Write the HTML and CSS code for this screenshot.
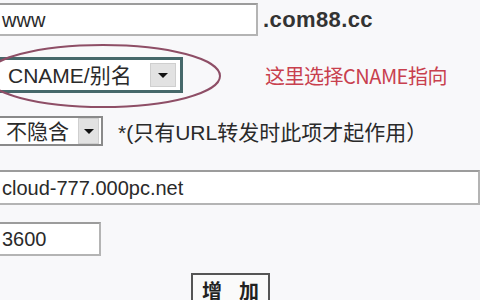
FILE: index.html
```html
<!DOCTYPE html>
<html lang="zh-CN">
<head>
<meta charset="utf-8">
<title>添加记录</title>
<link rel="stylesheet" href="styles.css">
</head>
<body>
<div class="form">
  <div class="row row-host">
    <div class="field field-host">www</div>
    <span class="domain">.com88.cc</span>
  </div>
  <div class="row row-type">
    <div class="select select-type">
      <span class="select-text">CNAME/别名</span>
      <span class="select-btn"><span class="arrow"></span></span>
    </div>
    <span class="hint">这里选择CNAME指向</span>
    <svg class="ring" viewBox="0 0 240 68" width="240" height="68" aria-hidden="true">
      <ellipse cx="120" cy="34" rx="117" ry="31" fill="none" stroke="#8e4e66" stroke-width="2"/>
    </svg>
  </div>
  <div class="row row-hide">
    <div class="select select-hide">
      <span class="select-text">不隐含</span>
      <span class="select-btn"><span class="arrow"></span></span>
    </div>
    <span class="note">*(只有URL转发时此项才起作用）</span>
  </div>
  <div class="row row-value">
    <div class="field field-value">cloud-777.000pc.net</div>
  </div>
  <div class="row row-ttl">
    <div class="field field-ttl">3600</div>
  </div>
  <div class="row row-submit">
    <div class="button"><span>增</span><span>加</span></div>
  </div>
</div>
</body>
</html>
```

FILE: styles.css
```css
html, body {
  margin: 0;
  padding: 0;
  background: #f8f8fa;
  overflow: hidden;
}

body {
  width: 480px;
  height: 300px;
  font-family: "Liberation Sans", "Noto Sans CJK SC", sans-serif;
  color: #2a2a2a;
}

.form {
  display: flex;
  flex-direction: column;
  padding-top: 3px;
}

.row {
  display: flex;
  align-items: center;
}

.field {
  box-sizing: border-box;
  background: #fff;
  border: 2px solid #b4b4b4;
  border-top-color: #9c9c9c;
  font-size: 20px;
  line-height: 1;
  display: flex;
  align-items: center;
  padding-left: 4px;
}

.field-host {
  margin-left: -6px;
  width: 264px;
  height: 33px;
  padding-left: 6px;
}

.domain {
  margin-left: 5px;
  font-size: 22px;
  font-weight: bold;
  color: #333;
  letter-spacing: 0.4px;
}

.row-type {
  position: relative;
  margin-top: 21px;
}

.select {
  box-sizing: border-box;
  background: #fff;
  display: flex;
  align-items: center;
  justify-content: space-between;
  font-size: 21px;
  line-height: 1;
}

.select-type {
  margin-left: -4px;
  width: 187px;
  height: 36px;
  border: 3px solid #46686a;
  padding: 0 4px 0 9px;
}

.select-hide {
  margin-left: -4px;
  width: 107px;
  height: 30px;
  border: 2px solid #8a8a8a;
  padding: 0 2px 0 8px;
}

.select-btn {
  display: flex;
  align-items: center;
  justify-content: center;
  background: #e2e2e2;
  border: 1px solid #cfcfcf;
}

.select-type .select-btn {
  width: 24px;
  height: 22px;
}

.select-hide .select-btn {
  width: 19px;
  height: 24px;
}

.arrow {
  width: 0;
  height: 0;
  border-left: 5px solid transparent;
  border-right: 5px solid transparent;
  border-top: 5px solid #111;
}

.hint {
  margin-left: 82px;
  font-family: "Noto Sans CJK SC", sans-serif;
  font-size: 20px;
  color: #c8404e;
  letter-spacing: -0.5px;
}

.ring {
  position: absolute;
  left: -17px;
  top: -15px;
  pointer-events: none;
}

.row-hide {
  margin-top: 23px;
}

.note {
  margin-left: 15px;
  font-family: "Liberation Sans", "Noto Sans CJK SC", sans-serif;
  font-size: 21px;
  color: #2a2a2a;
}

.row-value {
  margin-top: 24px;
}

.field-value {
  margin-left: -6px;
  width: 500px;
  height: 35px;
  padding-left: 6px;
}

.row-ttl {
  margin-top: 17px;
}

.field-ttl {
  margin-left: -6px;
  width: 107px;
  height: 34px;
  padding-left: 6px;
}

.row-submit {
  margin-top: 17px;
  padding-left: 191px;
}

.button {
  box-sizing: border-box;
  width: 79px;
  height: 34px;
  border: 2px solid #555;
  background: #fafafa;
  font-family: "Noto Sans CJK SC", sans-serif;
  font-size: 20px;
  font-weight: bold;
  display: flex;
  align-items: center;
  justify-content: center;
  gap: 17px;
  color: #222;
}
```
